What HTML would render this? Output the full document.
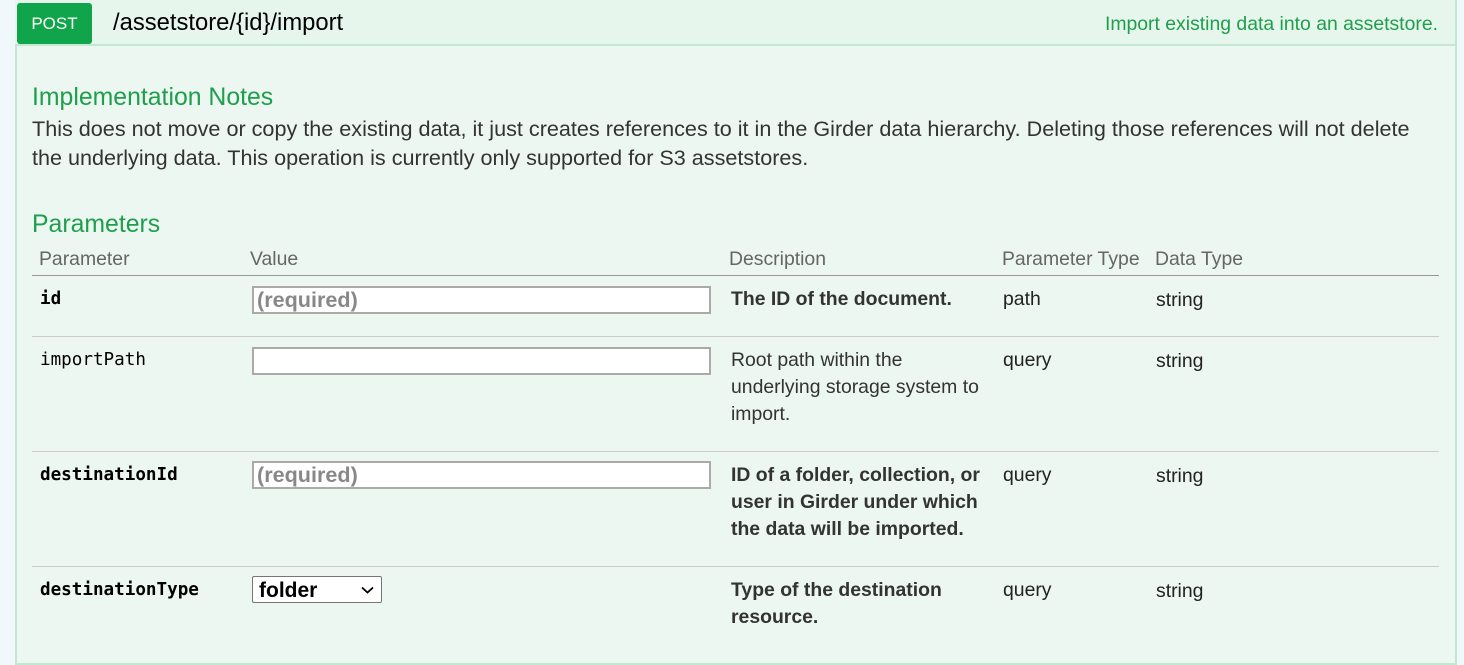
<html><head><style>
body{margin:0;width:1464px;height:644px;background:#f0f8fb;font-family:"Liberation Sans",sans-serif;position:relative;overflow:hidden}
.a{position:absolute;white-space:nowrap}
.panel{position:absolute;left:15px;top:0;width:1438px;height:660px;background:#ebf7f0;border:2px solid #c3e8d1;border-top:3px solid #c3e8d1}
.hdr{position:absolute;left:15px;top:0;width:1440px;height:44px;background:#e7f6ec;border-bottom:2px solid #c3e8d1}
.g{color:#1f9e4c}
.th{font-size:19.4px;color:#666;top:248px}
.mono{font-family:"DejaVu Sans Mono",monospace;font-size:17.6px;color:#000}
.d{font-size:19.4px;color:#333;line-height:27px;white-space:normal;width:258px}
.inp{position:absolute;left:252px;width:452px;height:24px;background:#fff;border:2px solid #aaa;font-size:21.6px;font-weight:bold;color:#888;line-height:24px;padding-left:3px;box-sizing:content-box}
.ln{position:absolute;left:32px;width:1407px;height:1px;background:#ccc}
.t{font-size:19.4px;color:#222}
</style></head><body>
<div class="panel"></div>
<div class="hdr"></div>
<div class="a" style="left:17px;top:3px;width:75px;height:41px;background:#10a54a;border-radius:3px;color:#fff;font-size:17px;line-height:42px;text-align:center">POST</div>
<div class="a" style="left:113px;top:9px;font-size:23.8px;color:#000">/assetstore/{id}/import</div>
<div class="a g" style="right:26px;top:13px;font-size:19.4px">Import existing data into an assetstore.</div>
<div class="a g" style="left:32px;top:84px;font-size:24.8px">Implementation Notes</div>
<div class="a" style="left:32px;top:114px;font-size:21.6px;line-height:29px;color:#333;white-space:normal;width:1410px">This does not move or copy the existing data, it just creates references to it in the Girder data hierarchy. Deleting those references will not delete the underlying data. This operation is currently only supported for S3 assetstores.</div>
<div class="a g" style="left:32px;top:211px;font-size:24.8px">Parameters</div>
<div class="a th" style="left:39px">Parameter</div>
<div class="a th" style="left:250px">Value</div>
<div class="a th" style="left:729px">Description</div>
<div class="a th" style="left:1002px">Parameter Type</div>
<div class="a th" style="left:1155px">Data Type</div>
<div class="ln" style="top:275px;background:#999"></div>

<div class="a mono" style="left:40px;top:289px;font-weight:bold">id</div>
<div class="inp" style="top:286px">(required)</div>
<div class="a d" style="left:731px;top:286px;font-weight:bold">The ID of the document.</div>
<div class="a t" style="left:1003px;top:288px">path</div>
<div class="a t" style="left:1156px;top:289px">string</div>
<div class="ln" style="top:336px"></div>

<div class="a mono" style="left:40px;top:350px">importPath</div>
<div class="inp" style="top:347px"></div>
<div class="a d" style="left:731px;top:347px">Root path within the underlying storage system to import.</div>
<div class="a t" style="left:1003px;top:349px">query</div>
<div class="a t" style="left:1156px;top:350px">string</div>
<div class="ln" style="top:451px"></div>

<div class="a mono" style="left:40px;top:465px;font-weight:bold">destinationId</div>
<div class="inp" style="top:461px">(required)</div>
<div class="a d" style="left:731px;top:462px;font-weight:bold">ID of a folder, collection, or user in Girder under which the data will be imported.</div>
<div class="a t" style="left:1003px;top:464px">query</div>
<div class="a t" style="left:1156px;top:465px">string</div>
<div class="ln" style="top:566px"></div>

<div class="a mono" style="left:40px;top:580px;font-weight:bold">destinationType</div>
<div class="a" style="left:252px;top:576px;width:130px;height:27px;background:#fff;border:1px solid #767676;border-radius:2px;font-size:21px;font-weight:bold;color:#000;line-height:27px;padding-left:6px;box-sizing:border-box">folder
<svg style="position:absolute;right:7px;top:9px" width="13" height="8" viewBox="0 0 13 8"><path d="M1 1.5L6.5 6.5L12 1.5" fill="none" stroke="#000" stroke-width="1.8"/></svg></div>
<div class="a d" style="left:731px;top:577px;font-weight:bold">Type of the destination resource.</div>
<div class="a t" style="left:1003px;top:579px">query</div>
<div class="a t" style="left:1156px;top:580px">string</div>
</body></html>
